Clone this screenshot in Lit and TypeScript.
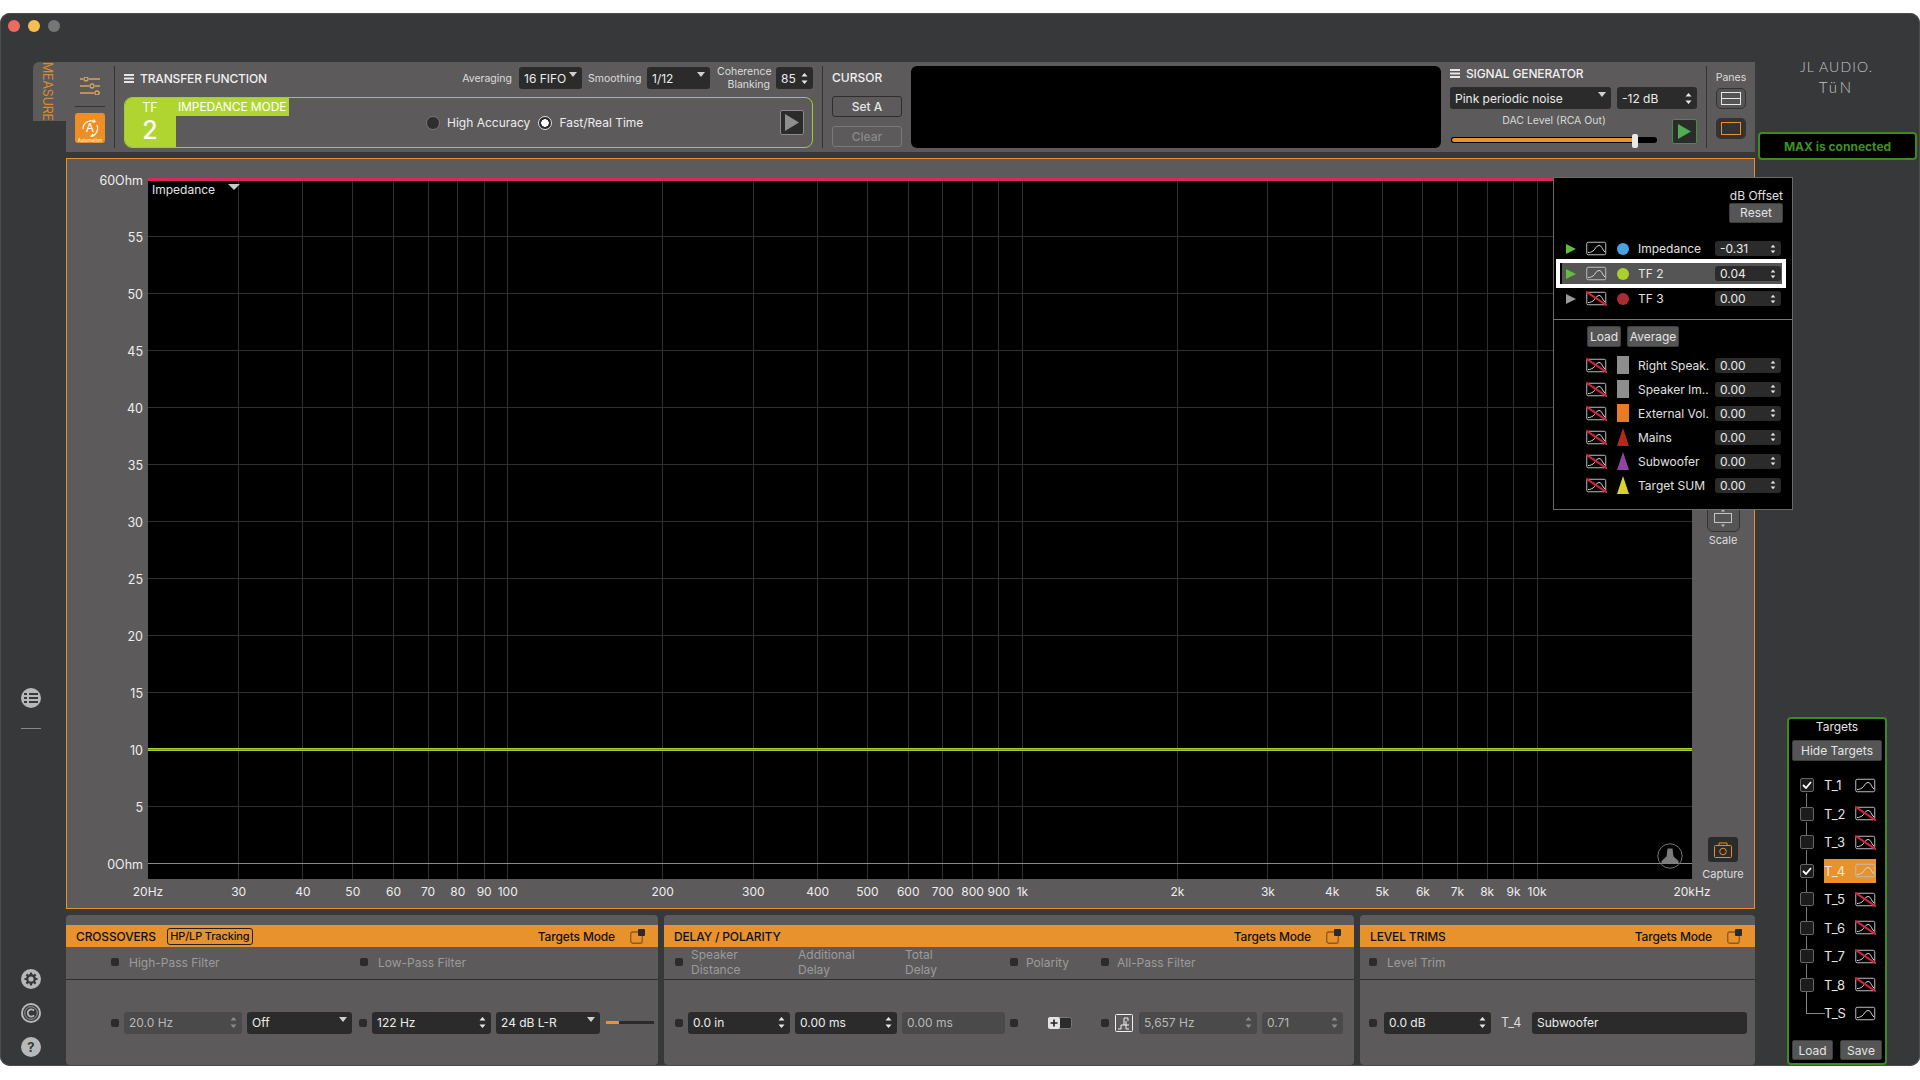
import { LitElement, html, css, svg, nothing } from 'lit';
import { customElement } from 'lit/decorators.js';

const spin = html`<svg class="arr" width="7" height="13" viewBox="0 0 7 13"><path d="M3.5 1 6.5 4.5H.5zM3.5 12 .5 8.5h6z" fill="currentColor"/></svg>`;
const drop = html`<svg class="arr top" width="8" height="5" viewBox="0 0 8 5"><path d="M0 0h8L4 5z" fill="#cfcfcf"/></svg>`;
const burger = html`<svg width="10" height="9" viewBox="0 0 10 9"><path d="M0 0h10v2H0zM0 3.5h10v2H0zM0 7h10v2H0z" fill="#e6e6e6"/></svg>`;

const curve = (off: boolean) => html`<svg class="curve" width="21" height="15" viewBox="0 0 21 15">
  <rect x=".75" y="1.25" width="19" height="12.5" rx="1.5" fill="none" stroke="#bdbdbd" stroke-width="1"/>
  <path d="M2 11.500c2.500 0 3-.5 5-1.500s3-5.500 6-5.500 3 4 6 6.500" fill="none" stroke="#d8d8d8" stroke-width="1"/>
  ${off ? svg`<path d="M0 .5 21 14.500" stroke="#d8243f" stroke-width="2"/>` : nothing}
</svg>`;

const popIcon = html`<svg width="15" height="15" viewBox="0 0 15 15">
  <rect x=".75" y="3" width="11.500" height="11.250" rx="2" fill="none" stroke="#8a5a1e" stroke-width="1.300"/>
  <rect x="8" y="0" width="7" height="7" rx="1" fill="#2a2a2a"/>
</svg>`;

const ticks = [20, 30, 40, 50, 60, 70, 80, 90, 100, 200, 300, 400, 500, 600, 700, 800, 900, 1000, 2000, 3000, 4000, 5000, 6000, 7000, 8000, 9000, 10000, 20000];
const levels = [60, 55, 50, 45, 40, 35, 30, 25, 20, 15, 10, 5, 0];
const xOf = (f: number) => (Math.log10(f / 20) / 3) * 1544;
const yOf = (v: number) => 685.3 - 11.4 * v;
const freqLabel = (f: number) => {
  if (f === 20) return '20Hz';
  if (f === 20000) return '20kHz';
  return f >= 1000 ? `${f / 1000}k` : `${f}`;
};

const traces = [
  { name: 'Impedance', on: true, play: '#5fbf3a', shape: 'dot', color: '#4aa3e0', val: '-0.31' },
  { name: 'TF 2', on: true, play: '#5fbf3a', shape: 'dot', color: '#a9d02e', val: '0.04', hl: true },
  { name: 'TF 3', on: false, play: '#9a9a9a', shape: 'dot', color: '#a92c35', val: '0.00' },
];
const stored = [
  { name: 'Right Speak.', shape: 'bar', color: '#8e8e8e' },
  { name: 'Speaker Im..', shape: 'bar', color: '#8e8e8e' },
  { name: 'External Vol.', shape: 'bar', color: '#ec7a22' },
  { name: 'Mains', shape: 'tri', color: '#b8281a' },
  { name: 'Subwoofer', shape: 'tri', color: '#8e44a0' },
  { name: 'Target SUM', shape: 'tri', color: '#d8d22c' },
];
const targets = [
  { name: 'T_1', checked: true, on: true },
  { name: 'T_2', checked: false, on: false },
  { name: 'T_3', checked: false, on: false },
  { name: 'T_4', checked: true, on: true, active: true },
  { name: 'T_5', checked: false, on: false },
  { name: 'T_6', checked: false, on: false },
  { name: 'T_7', checked: false, on: false },
  { name: 'T_8', checked: false, on: false },
];

@customElement('app-root')
class AppRoot extends LitElement {
  static styles = css`
    :host {
      display: block;
      height: 1080px;
      width: 1920px;
      overflow: hidden;
      background: #fff;
      padding-top: 13px;
      box-sizing: border-box;
      font-family: Inter, "Liberation Sans", sans-serif;
      font-size: 12px;
      color: #e8e8e8;
    }
    * { box-sizing: border-box; }
    .window {
      height: 1053px;
      background: #37383a;
      border-radius: 10px;
      box-shadow: inset 0 0 0 1px #4c4c4e;
      overflow: hidden;
    }
    .titlebar {
      height: 49px;
      display: flex;
      gap: 8px;
      padding: 7px 0 0 8px;
    }
    .light { width: 12px; height: 12px; border-radius: 50%; }
    .main {
      display: grid;
      grid-template-columns: 66px 1689px 165px;
      height: 1004px;
    }

    /* left rail */
    .rail { display: flex; flex-direction: column; }
    .tab {
      align-self: flex-end;
      width: 33px;
      height: 59px;
      background: #5c5a5b;
      border-radius: 6px 0 0 0;
      color: #d98a2b;
      writing-mode: vertical-rl;
      font-size: 12.500px;
      line-height: 38px;
      letter-spacing: -0.2px;
      overflow: hidden;
      white-space: nowrap;
    }
    .rail svg, .rail .q { margin-left: 21px; display: block; flex: none; }
    .rail .i-list { margin-top: 567px; }
    .rail .hr { margin: 20px 0 0 21px; width: 20px; height: 1px; background: #888; }
    .rail .i-gear { margin-top: 240px; }
    .rail .i-c { margin-top: 14px; }
    .q {
      margin-top: 14px;
      width: 20px;
      height: 20px;
      border-radius: 50%;
      background: #b8b8b8;
      color: #37383a;
      font-weight: 700;
      font-size: 13px;
      line-height: 20px;
      text-align: center;
    }

    /* center column */
    .center { display: flex; flex-direction: column; gap: 6px; }
    .toolbar {
      height: 90px;
      background: #5c5a5b;
      display: flex;
      flex: none;
    }
    .vsep { width: 1px; background: #333; margin: 4px 0; flex: none; }
    .side { width: 48px; padding-left: 9px; display: flex; flex-direction: column; flex: none; }
    .side .sl { margin: 15px 0 0 5px; display: block; }
    .side .hr { width: 30px; height: 1px; background: #333; margin-top: 11px; }
    .side .auto { margin-top: 6px; display: block; }

    .tf { width: 707px; padding: 5px 9px 0 9px; flex: none; }
    .tf-head { display: flex; align-items: center; height: 22px; font-size: 10.500px; color: #ddd; }
    .title {
      display: flex;
      align-items: center;
      gap: 6px;
      font-size: 12px;
      font-weight: 500;
      letter-spacing: -0.150px;
      color: #f0f0f0;
      white-space: nowrap;
    }
    .avg-l { margin-left: auto; }
    .smooth { width: 52px; text-align: center; }
    .ctl {
      display: flex;
      align-items: center;
      justify-content: space-between;
      height: 22px;
      border-radius: 3px;
      background: #2b2b2b;
      color: #ececec;
      font-size: 12px;
      padding: 0 5px;
      white-space: nowrap;
      flex: none;
    }
    .ctl.dis { background: #4a4a4a; color: #b8b8b8; }
    .ctl .arr { color: #e8e8e8; flex: none; }
    .ctl.dis .arr { color: #8a8a8a; }
    .ctl .arr.top { align-self: flex-start; margin-top: 5px; }
    .w63 { width: 63px; margin: 0 6px 0 7px; }
    .coh { margin-left: 1px; text-align: right; line-height: 13px; width: 53px; }
    .w37 { width: 37px; margin-left: 6px; }
    .tf-box {
      margin-top: 8px;
      height: 51px;
      border: 1px solid #a6c93a;
      border-radius: 8px;
      display: flex;
      overflow: hidden;
    }
    .tf-num {
      width: 52px;
      margin: -1px 0 -1px -1px;
      background: #b0d531;
      color: #fff;
      display: flex;
      flex-direction: column;
      align-items: center;
      flex: none;
    }
    .tf-num span { font-size: 12.500px; line-height: 14px; margin-top: 4px; }
    .tf-num b { font-size: 25px; line-height: 30px; font-weight: 500; }
    .tag {
      width: 113px;
      height: 18px;
      background: #b0d531;
      color: #fff;
      font-size: 12px;
      line-height: 17px;
      letter-spacing: -0.1px;
      padding-left: 2px;
      white-space: nowrap;
      flex: none;
    }
    .modes { flex: 1; display: flex; align-items: center; padding-left: 137px; font-size: 12px; color: #eee; }
    .radio {
      width: 14px;
      height: 14px;
      border-radius: 50%;
      background: #2e2e2e;
      border: 1px solid #777;
      margin-right: 7px;
      flex: none;
    }
    .radio.on { border-color: #ddd; background: radial-gradient(circle, #fff 0 3.500px, #2a2a2a 4px); }
    .modes .sp { margin-right: 8px; white-space: nowrap; }
    .playbox {
      margin-left: auto;
      margin-right: 8px;
      width: 24px;
      height: 25px;
      background: #2b2b2b;
      border: 1px solid #8a8a8a;
      border-radius: 2px;
      display: flex;
      align-items: center;
      justify-content: center;
    }

    .cursor { width: 88px; padding-left: 9px; flex: none; }
    .cursor .head { font-size: 12px; font-weight: 500; line-height: 16px; margin-top: 8px; color: #f0f0f0; }
    .btn {
      display: flex;
      align-items: center;
      justify-content: center;
      border-radius: 3px;
      font-size: 12px;
      color: #e6e6e6;
      white-space: nowrap;
    }
    .outline { width: 70px; height: 21px; border: 1px solid #2e2e2e; margin-top: 10px; font-weight: 500; }
    .outline.off { margin-top: 9px; border-color: #7a7a7a; color: #8a8a8a; }
    .scope { width: 530px; height: 82px; margin-top: 4px; background: #000; border-radius: 6px; flex: none; }

    .sig { width: 265px; padding: 4px 9px 0 9px; flex: none; }
    .sig .title { height: 14px; }
    .sig-row { display: flex; gap: 6px; margin-top: 7px; }
    .sig-row .a { width: 161px; }
    .sig-row .b { width: 80px; }
    .sig-low { display: flex; margin-top: 5px; }
    .dac { width: 206px; margin-left: 1px; flex: none; }
    .dac span { display: block; text-align: center; font-size: 10.500px; line-height: 14px; color: #d8d8d8; }
    .track {
      position: relative;
      margin-top: 9px;
      height: 6px;
      background: #000;
      border-radius: 3px;
      width: 206px;
    }
    .track i { display: block; height: 6px; border-radius: 3px; background: #e8942c; border: 1px solid #000; }
    .track u { position: absolute; top: -3px; width: 6px; height: 14px; border-radius: 2px; background: #e8e8e8; }
    .go {
      width: 25px;
      height: 25px;
      margin: 5px 0 0 15px;
      background: #2b2b2b;
      border: 1px solid #3f8f44;
      border-radius: 2px;
      display: flex;
      align-items: center;
      justify-content: center;
      flex: none;
    }
    .panes { flex: 1; display: flex; flex-direction: column; align-items: center; }
    .panes span { font-size: 10.500px; color: #ddd; line-height: 14px; margin-top: 9px; }
    .pane { width: 30px; height: 21px; border-radius: 5px; display: flex; align-items: center; justify-content: center; margin-top: 3px; }
    .pane.a { background: #555; border: 1px solid #333; }
    .pane.b { background: #333; margin-top: 9px; }

    /* chart */
    .chart {
      position: relative;
      height: 751px;
      flex: none;
      background: #5c5a5b;
      border: 1px solid #e8902c;
      display: grid;
      grid-template-columns: 81px 1544px 62px;
      grid-template-rows: 19px 701px 29px;
    }
    .y-axis { grid-column: 1; grid-row: 2; position: relative; }
    .y-axis span {
      position: absolute;
      right: 5px;
      transform: translateY(-50%);
      font-size: 12.500px;
      color: #eee;
      white-space: nowrap;
    }
    .plot { grid-column: 2; grid-row: 2; position: relative; background: #000; }
    .plot svg { display: block; }
    .plot .name { position: absolute; left: 4px; top: 4px; font-size: 12px; color: #e4e4e4; }
    .plot .nav { position: absolute; left: 80px; top: 6px; display: block; }
    .jl { position: absolute; left: 1509px; top: 665px; }
    .x-axis { grid-column: 2; grid-row: 3; position: relative; }
    .x-axis span {
      position: absolute;
      top: 5px;
      line-height: 16px;
      transform: translateX(-50%);
      font-size: 12px;
      color: #eee;
      white-space: nowrap;
    }
    .tools { grid-column: 3; grid-row: 2; display: flex; flex-direction: column; align-items: center; padding: 323px 0 0 0; font-size: 11px; color: #ddd; }
    .tools span { line-height: 16px; }
    .tools .cap-l { margin: 4px 0 -3px; }
    .scale-b { width: 33px; height: 31px; border: 1px solid #333; border-radius: 6px; background: #555; display: flex; align-items: center; justify-content: center; padding-top: 3px; }
    .cap-b { margin-top: auto; width: 30px; height: 25px; border-radius: 3px; background: #2b2b2b; display: flex; align-items: center; justify-content: center; }

    .pop {
      position: absolute;
      left: 1486px;
      top: 18px;
      width: 240px;
      height: 333px;
      background: #000;
      border: 1px solid #6a6a6a;
      color: #e0e0e0;
      padding-top: 10px;
    }
    .pop-head { display: flex; flex-direction: column; align-items: flex-end; padding-right: 9px; font-size: 12px; line-height: 16px; }
    .btn.grey { background: #555; border: 1px solid #3d3d3d; border-radius: 2px; height: 20px; font-size: 12px; color: #e4e4e4; }
    .reset { width: 54px; margin-top: -1px; }
    .trs { margin-top: 15px; display: flex; flex-direction: column; gap: 4px; }
    .tr {
      display: grid;
      grid-template-columns: 10px 21px 12px 66px 66px;
      column-gap: 10px;
      align-items: center;
      height: 21px;
      margin: 0 10px 0 6px;
      padding-left: 6px;
      white-space: nowrap;
    }
    .tr.hl { background: #555; box-shadow: 0 0 0 4px #fff, inset 2px 0 0 #000; color: #e8e8e8; }
    .tr .ctl { height: 15px; font-size: 12px; width: 66px; padding: 0 5px; }
    .tr.st { height: 24px; }
    .tr .ctl .arr { height: 10px; width: 6px; }
    .tr .lbl { margin-left: -1px; }
    .shape { display: block; justify-self: center; }
    .dot { width: 12px; height: 12px; border-radius: 50%; }
    .bar { width: 12px; height: 18px; }
    .tri { width: 12px; height: 18px; clip-path: polygon(50% 0, 100% 100%, 0 100%); }
    .pop hr { border: 0; height: 1px; background: #777; margin: 10px 0 0; }
    .pop-btns { display: flex; gap: 6px; margin: 6px 0 6px 33px; }
    .pop-btns .btn { height: 21px; }
    .pop-btns .load { width: 34px; }
    .pop-btns .average { width: 52px; }

    /* bottom panels */
    .bottom { display: grid; grid-template-columns: 592px 690px 395px; column-gap: 6px; height: 150px; flex: none; }
    .sec { background: #5c5a5b; border-radius: 4px; padding-top: 10px; display: flex; flex-direction: column; }
    .sec-head {
      height: 22px;
      background: #e8922e;
      color: #111;
      display: flex;
      align-items: center;
      padding: 0 13px 0 10px;
      font-size: 12px;
      font-weight: 500;
      letter-spacing: -0.150px;
      white-space: nowrap;
      flex: none;
    }
    .sec-head .mode { margin-left: auto; margin-right: 15px; font-size: 12px; }
    .sec-head svg { display: block; }
    .badge { margin-left: 11px; border: 1px solid #222; border-radius: 3px; height: 17px; width: 86px; font-size: 11px; line-height: 15px; text-align: center; }
    .labels { height: 33px; padding-bottom: 2px; border-bottom: 1px solid #2e2e2e; display: grid; align-items: center; color: #9c9c9c; font-size: 12px; flex: none; }
    .labels .l { display: flex; align-items: center; gap: 10px; white-space: nowrap; }
    .labels .two { line-height: 15px; }
    .labels .l.tight { gap: 8px; }
    .xo-l { grid-template-columns: 249px 1fr; padding-left: 45px; }
    .dl-l { grid-template-columns: 123px 107px 105px 91px 1fr; padding-left: 11px; }
    .lv-l { padding-left: 9px; }
    .led { width: 8px; height: 8px; border-radius: 2px; background: #2b2b2b; flex: none; }
    .ctls { flex: 1; display: grid; align-items: center; column-gap: 5px; }
    .xo-c { grid-template-columns: 8px 118px 105px 10px 119px 104px 49px; padding-left: 45px; }
    .xo-c .led.end { justify-self: end; }
    .fader { height: 3px; width: 48px; margin-left: 1px; background: linear-gradient(90deg, #e8942c 0 13px, #2b2b2b 13px); }
    .dl-c { grid-template-columns: 8px 102px 102px 103px 8px 73px 8px 20px 118px 81px; padding-left: 11px; }
    .dl-c .last { width: 79px; justify-self: end; }
    .toggle { justify-self: center; width: 24px; height: 12px; display: block; }
    .apf { justify-self: center; display: block; }
    .lv-c { grid-template-columns: 8px 107px 27px 215px; column-gap: 7px; padding-left: 9px; }
    .lv-c .nm { padding-left: 3px; font-size: 12.500px; color: #ddd; }
    .dl-c .ctl, .xo-c .ctl, .lv-c .ctl { width: 100%; }

    /* right rail */
    .right { display: flex; flex-direction: column; }
    .logo {
      margin-top: -5px;
      text-align: center;
      width: 162px;
      padding-left: 1px;
      font-family: Lato, Inter, sans-serif;
      font-weight: 300;
      color: #c4c4c4;
      font-size: 14px;
      line-height: 20px;
      letter-spacing: 1.100px;
      height: 75px;
      flex: none;
    }
    .logo div + div { letter-spacing: 3px; font-size: 15px; }
    .max {
      margin-left: 3px;
      width: 159px;
      height: 28px;
      background: #000;
      border: 2px solid #3d8a1e;
      border-radius: 4px;
      color: #3f9120;
      font-weight: 700;
      font-size: 12px;
      line-height: 25px;
      text-align: center;
      flex: none;
    }
    .tg {
      margin: 557px 0 0 32px;
      width: 100px;
      height: 348px;
      background: #000;
      border: 2px solid #3d8a1e;
      border-radius: 4px;
      display: flex;
      flex-direction: column;
      align-items: center;
      color: #e4e4e4;
      flex: none;
    }
    .tg .t { font-size: 12px; line-height: 16px; }
    .tg .hide { width: 90px; height: 21px; margin-top: 5px; }
    .rows { width: 100%; margin-top: 10px; }
    .row {
      position: relative;
      height: 28.500px;
      display: flex;
      align-items: center;
      padding-left: 11px;
      font-size: 13px;
    }
    .row::after {
      content: "";
      position: absolute;
      left: 17px;
      top: 22px;
      height: 15px;
      width: 1px;
      background: #777;
    }
    .row.end::after { top: -7px; height: 21px; width: 18px; background: none; border-left: 1px solid #888; border-bottom: 1px solid #888; }
    .row.last::after { display: none; }
    .box {
      width: 14px;
      height: 14px;
      border: 1px solid #666;
      border-radius: 2px;
      background: #1c1c1c;
      margin-right: 10px;
      flex: none;
      display: flex;
      align-items: center;
      justify-content: center;
      z-index: 1;
    }
    .box.blank { border: 0; background: transparent; }
    .nm-ic { width: 52px; height: 24px; display: flex; align-items: center; justify-content: space-between; }
    .nm-ic.act { background: #e8922e; color: #f6e6d0; }
    .row .curve { display: block; }
    .foot { display: flex; gap: 7px; margin-top: auto; margin-bottom: 3px; }
    .foot .l { width: 41px; }
    .foot .s { width: 42px; }
  `;

  private renderTrace(t: { name: string; on?: boolean; play?: string; shape: string; color: string; val?: string; hl?: boolean }, st = false) {
    return html`<div class="tr ${t.hl ? 'hl' : ''} ${st ? 'st' : ''}">
      ${t.play
        ? html`<svg width="10" height="12" viewBox="0 0 10 12"><path d="M0 1 10 6 0 11z" fill=${t.play}/></svg>`
        : html`<span></span>`}
      ${curve(!t.on)}
      <i class="shape ${t.shape}" style="background:${t.color}"></i>
      <span class="lbl">${t.name}</span>
      <div class="ctl"><span>${t.val ?? '0.00'}</span>${spin}</div>
    </div>`;
  }

  private renderRail() {
    return html`<div class="rail">
      <div class="tab">MEASURE</div>
      <svg class="i-list" width="20" height="20" viewBox="0 0 20 20">
        <circle cx="10" cy="10" r="10" fill="#b8b8b8"/>
        <path d="M3 5h3v2H3zM8 5h9v2H8zM3 9h3v2H3zM8 9h9v2H8zM3 13h3v2H3zM8 13h9v2H8z" fill="#37383a"/>
      </svg>
      <div class="hr"></div>
      <svg class="i-gear" width="20" height="20" viewBox="0 0 20 20">
        <circle cx="10" cy="10" r="10" fill="#b8b8b8"/>
        <circle cx="10" cy="10" r="3.800" fill="none" stroke="#37383a" stroke-width="2.400"/>
        <path d="M10 3.500v2.500M10 14v2.500M3.500 10H6M14 10h2.500M5.400 5.400l1.800 1.800M12.800 12.800l1.800 1.800M14.600 5.400l-1.800 1.800M7.200 12.800l-1.800 1.800" stroke="#37383a" stroke-width="2.200"/>
      </svg>
      <svg class="i-c" width="20" height="20" viewBox="0 0 20 20">
        <circle cx="10" cy="10" r="9" fill="none" stroke="#b8b8b8" stroke-width="2"/>
        <circle cx="10" cy="10" r="6.300" fill="none" stroke="#b8b8b8" stroke-width=".8"/>
        <path d="M13 7.600A3.600 3.600 0 1 0 13 12.400" fill="none" stroke="#b8b8b8" stroke-width="1.800"/>
      </svg>
      <div class="q">?</div>
    </div>`;
  }

  private renderToolbar() {
    return html`<div class="toolbar">
      <div class="side">
        <svg class="sl" width="20" height="18" viewBox="0 0 20 18" fill="none" stroke="#d9a35c" stroke-width="1.300">
          <path d="M9 2h11M0 2h3M0 9h9M15 9h5M0 16h14M19 16h1"/>
          <circle cx="6" cy="2" r="2"/><circle cx="12" cy="9" r="2"/><circle cx="17" cy="16" r="2"/>
        </svg>
        <div class="hr"></div>
        <svg class="auto" width="30" height="30" viewBox="0 0 30 30">
          <rect width="30" height="30" rx="3" fill="#ee8f26"/>
          <path d="M8 16a8 8 0 0 1 11-7.500M22 12a8 8 0 0 1-5 11" fill="none" stroke="#fff" stroke-width="1.200"/>
          <path d="M19 6l2 3-3.500 1zM15 24l2.500-3.500 1.500 3z" fill="#fff"/>
          <text x="15" y="19" text-anchor="middle" font-size="12" fill="#fff" font-family="Inter, sans-serif">A</text>
          <text x="15" y="28.500" text-anchor="middle" font-size="4.500" fill="#fff" font-family="Inter, sans-serif">Automation</text>
        </svg>
      </div>
      <div class="vsep"></div>
      <div class="tf">
        <div class="tf-head">
          <div class="title">${burger}TRANSFER FUNCTION</div>
          <span class="avg-l">Averaging</span>
          <div class="ctl w63"><span>16 FIFO</span>${drop}</div>
          <span class="smooth">Smoothing</span>
          <div class="ctl w63"><span>1/12</span>${drop}</div>
          <div class="coh">Coherence<br />Blanking</div>
          <div class="ctl w37"><span>85</span>${spin}</div>
        </div>
        <div class="tf-box">
          <div class="tf-num"><span>TF</span><b>2</b></div>
          <div class="tag">IMPEDANCE MODE</div>
          <div class="modes">
            <div class="radio"></div><span class="sp">High Accuracy</span>
            <div class="radio on"></div><span class="sp">Fast/Real Time</span>
            <div class="playbox">
              <svg width="14" height="17" viewBox="0 0 14 17"><path d="M0 0 14 8.500 0 17z" fill="#8e8e8e"/></svg>
            </div>
          </div>
        </div>
      </div>
      <div class="vsep"></div>
      <div class="cursor">
        <div class="head">CURSOR</div>
        <div class="btn outline">Set A</div>
        <div class="btn outline off">Clear</div>
      </div>
      <div class="scope"></div>
      <div class="sig">
        <div class="title">${burger}SIGNAL GENERATOR</div>
        <div class="sig-row">
          <div class="ctl a"><span>Pink periodic noise</span>${drop}</div>
          <div class="ctl b"><span>-12 dB</span>${spin}</div>
        </div>
        <div class="sig-low">
          <div class="dac">
            <span>DAC Level (RCA Out)</span>
            <div class="track"><i style="width:${(184 / 206) * 100}%"></i><u style="left:181px"></u></div>
          </div>
          <div class="go">
            <svg width="13" height="15" viewBox="0 0 13 15"><path d="M0 0 13 7.500 0 15z" fill="#4fae52"/></svg>
          </div>
        </div>
      </div>
      <div class="vsep"></div>
      <div class="panes">
        <span>Panes</span>
        <div class="pane a"><svg width="20" height="13" viewBox="0 0 20 13" fill="none" stroke="#e8e8e8"><rect x=".5" y=".5" width="19" height="12"/><path d="M0 6.500h20"/></svg></div>
        <div class="pane b"><svg width="20" height="13" viewBox="0 0 20 13" fill="none" stroke="#e8922e"><rect x=".5" y=".5" width="19" height="12"/></svg></div>
      </div>
    </div>`;
  }

  private renderChart() {
    return html`<div class="chart">
      <div class="y-axis">
        ${levels.map(
          v => html`<span style="top:${yOf(v) + 1}px">${v === 60 || v === 0 ? `${v}Ohm` : v}</span>`
        )}
      </div>
      <div class="plot">
        <svg width="1544" height="701" viewBox="0 0 1544 701" shape-rendering="crispEdges">
          ${ticks.slice(1, -1).map(f => svg`<line x1=${xOf(f)} x2=${xOf(f)} y1="0" y2="701" stroke="#303030"/>`)}
          ${levels.slice(1, -1).map(v => svg`<line x1="0" x2="1544" y1=${yOf(v)} y2=${yOf(v)} stroke="#303030"/>`)}
          <line x1="0" x2="1544" y1=${yOf(0)} y2=${yOf(0)} stroke="#8a8a8a"/>
          <rect x="0" y="0" width="1544" height="2.500" fill="#e0245e"/>
          <rect x="0" y="569.500" width="1544" height="3" fill="#a8cf2f"/>
          <rect x="0" y="571" width="1544" height="1" fill="#7c9a24"/>
        </svg>
        <span class="name">Impedance</span>
        <svg class="nav" width="12" height="6" viewBox="0 0 12 6"><path d="M0 0h12L6 6z" fill="#c8c8c8"/></svg>
        <svg class="jl" width="26" height="26" viewBox="0 0 26 26">
          <circle cx="13" cy="13" r="12.200" fill="none" stroke="#777" stroke-width="1"/>
          <path d="M10.500 5.500h5l1 8 5 4.500v2.500H4.500V18l5-4.500z" fill="#7c7c7c"/>
        </svg>
      </div>
      <div class="x-axis">
        ${ticks.map(f => html`<span style="left:${xOf(f)}px">${freqLabel(f)}</span>`)}
      </div>
      <div class="tools">
        <div class="scale-b">
          <svg width="18" height="20" viewBox="0 0 18 20"><rect x=".5" y="5.500" width="17" height="9" fill="none" stroke="#c4c4c4"/><path d="M9 1 11 3.500H7zM9 19 7 16.500h4z" fill="#c4c4c4"/></svg>
        </div>
        <span>Scale</span>
        <div class="cap-b">
          <svg width="18" height="16" viewBox="0 0 18 16" fill="none" stroke="#e09030" stroke-width="1"><rect x=".5" y="3.500" width="17" height="12" rx="1"/><circle cx="9" cy="9.500" r="3.300"/><path d="M5 3.500V1h8v2.500"/></svg>
        </div>
        <span class="cap-l">Capture</span>
      </div>
      <div class="pop">
        <div class="pop-head">
          <span>dB Offset</span>
          <div class="btn grey reset">Reset</div>
        </div>
        <div class="trs">${traces.map(t => this.renderTrace(t))}</div>
        <hr />
        <div class="pop-btns">
          <div class="btn grey load">Load</div>
          <div class="btn grey average">Average</div>
        </div>
        ${stored.map(t => this.renderTrace({ ...t, on: false }, true))}
      </div>
    </div>`;
  }

  private renderBottom() {
    return html`<div class="bottom">
      <div class="sec">
        <div class="sec-head">
          <span>CROSSOVERS</span><div class="badge">HP/LP Tracking</div>
          <span class="mode">Targets Mode</span>${popIcon}
        </div>
        <div class="labels xo-l">
          <div class="l"><i class="led"></i>High-Pass Filter</div>
          <div class="l"><i class="led"></i>Low-Pass Filter</div>
        </div>
        <div class="ctls xo-c">
          <i class="led"></i>
          <div class="ctl dis"><span>20.0 Hz</span>${spin}</div>
          <div class="ctl"><span>Off</span>${drop}</div>
          <i class="led end"></i>
          <div class="ctl"><span>122 Hz</span>${spin}</div>
          <div class="ctl"><span>24 dB L-R</span>${drop}</div>
          <div class="fader"></div>
        </div>
      </div>
      <div class="sec">
        <div class="sec-head"><span>DELAY / POLARITY</span><span class="mode">Targets Mode</span>${popIcon}</div>
        <div class="labels dl-l">
          <div class="l tight"><i class="led"></i><span class="two">Speaker<br />Distance</span></div>
          <div class="two">Additional<br />Delay</div>
          <div class="two">Total<br />Delay</div>
          <div class="l tight"><i class="led"></i>Polarity</div>
          <div class="l tight"><i class="led"></i>All-Pass Filter</div>
        </div>
        <div class="ctls dl-c">
          <i class="led"></i>
          <div class="ctl"><span>0.0 in</span>${spin}</div>
          <div class="ctl"><span>0.00 ms</span>${spin}</div>
          <div class="ctl dis"><span>0.00 ms</span></div>
          <i class="led"></i>
          <svg class="toggle" viewBox="0 0 24 12">
            <rect x=".5" y=".5" width="23" height="11" rx="2" fill="#2b2b2b" stroke="#777"/>
            <rect x="0" y="0" width="12" height="12" rx="2" fill="#e4e4e4"/>
            <path d="M6 2.500v7M2.500 6h7" stroke="#222" stroke-width="1.600"/>
          </svg>
          <i class="led"></i>
          <svg class="apf" width="18" height="18" viewBox="0 0 18 18" fill="none" stroke="#f0f0f0">
            <rect x=".5" y=".5" width="17" height="17" rx="1" stroke-width="1"/>
            <path d="M3 15h3v-4h3V4h4v3M9 11h5M11 7v8h3" stroke-width="1"/>
          </svg>
          <div class="ctl dis"><span>5,657 Hz</span>${spin}</div>
          <div class="ctl dis last"><span>0.71</span>${spin}</div>
        </div>
      </div>
      <div class="sec">
        <div class="sec-head"><span>LEVEL TRIMS</span><span class="mode">Targets Mode</span>${popIcon}</div>
        <div class="labels lv-l"><div class="l"><i class="led"></i>Level Trim</div></div>
        <div class="ctls lv-c">
          <i class="led"></i>
          <div class="ctl"><span>0.0 dB</span>${spin}</div>
          <span class="nm">T_4</span>
          <div class="ctl"><span>Subwoofer</span></div>
        </div>
      </div>
    </div>`;
  }

  private renderTargets() {
    const tick = html`<svg width="10" height="8" viewBox="0 0 10 8"><path d="M1 4 4 7 9 1" fill="none" stroke="#fff" stroke-width="1.800"/></svg>`;
    return html`<div class="tg">
      <div class="t">Targets</div>
      <div class="btn grey hide">Hide Targets</div>
      <div class="rows">
        ${targets.map(
          (t, i) => html`<div class="row ${i === targets.length - 1 ? 'last' : ''}">
            <div class="box">${t.checked ? tick : nothing}</div>
            <div class="nm-ic ${t.active ? 'act' : ''}"><span>${t.name}</span>${curve(!t.on)}</div>
          </div>`
        )}
        <div class="row end">
          <div class="box blank"></div>
          <div class="nm-ic"><span>T_S</span>${curve(false)}</div>
        </div>
      </div>
      <div class="foot">
        <div class="btn grey l">Load</div>
        <div class="btn grey s">Save</div>
      </div>
    </div>`;
  }

  render() {
    return html`<div class="window">
      <div class="titlebar">
        <i class="light" style="background:#ec6a5e"></i>
        <i class="light" style="background:#f4bf4f"></i>
        <i class="light" style="background:#767676"></i>
      </div>
      <div class="main">
        ${this.renderRail()}
        <div class="center">
          ${this.renderToolbar()}
          ${this.renderChart()}
          ${this.renderBottom()}
        </div>
        <div class="right">
          <div class="logo"><div>JL AUDIO.</div><div>TüN</div></div>
          <div class="max">MAX is connected</div>
          ${this.renderTargets()}
        </div>
      </div>
    </div>`;
  }
}
